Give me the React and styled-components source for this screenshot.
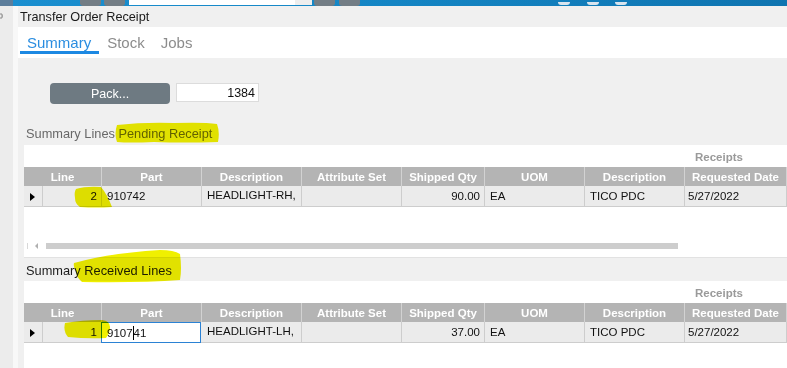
import React from "react";
import styled, { createGlobalStyle } from "styled-components";

const GlobalStyle = createGlobalStyle`
  html, body {
    margin: 0;
    padding: 0;
    background: #f0f0f0;
    overflow: hidden;
  }
  * {
    box-sizing: border-box;
  }
`;

const COLS = "19px 59px 100px 100px 100px 83px 100px 100px 102px";

const pendingRows = [
  { line: "2", part: "910742", desc: "HEADLIGHT-RH,", attr: "", qty: "90.00", uom: "EA", site: "TICO PDC", date: "5/27/2022" },
];

const receivedRows = [
  { line: "1", part: "910741", desc: "HEADLIGHT-LH,", attr: "", qty: "37.00", uom: "EA", site: "TICO PDC", date: "5/27/2022", editing: true },
];

const headers = ["Part", "Description", "Attribute Set", "Shipped Qty", "UOM", "Description", "Requested Date"];

export default function App() {
  return (
    <Page>
      <GlobalStyle />
      <TopBar>
        <AppCorner />
        <ToolButton $ml={67} />
        <ToolButton $ml={3} />
        <SearchBox $ml={4}>
          <SearchTail />
        </SearchBox>
        <ToolButton $ml={2} />
        <ToolButton $ml={4} />
        <TopIcon $ml={198} />
        <TopIcon $ml={17} />
        <TopIcon $ml={16} />
      </TopBar>
      <Body>
        <SideRail>
          <PinIcon width="8" height="8" viewBox="0 0 8 8">
            <path d="M0 4h2M2 1.5v5M2 2h3v4H2M5 4h1" stroke="#8a8a8a" strokeWidth="1" fill="none" />
          </PinIcon>
        </SideRail>
        <RailEdge />
        <Main>
          <TitleBar>Transfer Order Receipt</TitleBar>
          <Tabs>
            <Tab $active>Summary</Tab>
            <Tab>Stock</Tab>
            <Tab>Jobs</Tab>
          </Tabs>
          <Toolbar>
            <PackButton>Pack...</PackButton>
            <NumberField>1384</NumberField>
          </Toolbar>
          <SectionLabel $muted>Summary Lines Pending Receipt</SectionLabel>
          <GridPanel>
            <Grid rows={pendingRows} />
            <ScrollTrack>
              <ScrollStop />
              <ScrollArrow />
              <ScrollThumb />
            </ScrollTrack>
          </GridPanel>
          <SectionLabel $tight>Summary Received Lines</SectionLabel>
          <GridPanel $fill>
            <Grid rows={receivedRows} />
          </GridPanel>
        </Main>
      </Body>

      <Marker style={{ left: 114, top: 122 }} width="106" height="22" viewBox="0 0 106 22">
        <path d="M3 3 Q30 0 60 1 Q90 0 103 2 Q106 10 104 20 Q70 21 40 20 Q15 21 3 20 Q0 12 3 3Z" />
      </Marker>
      <Marker style={{ left: 74, top: 186 }} width="40" height="22" viewBox="0 0 40 22">
        <path d="M2 3 Q12 0 27 1 Q33 8 38 21 Q22 22 6 21 Q1 18 1 12 Q0 6 2 3Z" />
      </Marker>
      <Marker style={{ left: 70, top: 249 }} width="112" height="35" viewBox="0 0 112 35">
        <path d="M4 14 Q40 4 90 1 Q104 1 110 5 Q112 20 110 31 Q70 34 12 33 Q6 28 6 22 Q3 18 4 14Z" />
      </Marker>
      <Marker style={{ left: 62, top: 319 }} width="50" height="21" viewBox="0 0 50 21">
        <path d="M3 4 Q20 1 40 1 Q48 2 48 8 Q48 14 44 19 Q25 20 6 18 Q1 12 3 4Z" />
      </Marker>
    </Page>
  );
}

function Grid({ rows }) {
  return (
    <GridTable>
      <GroupRow>
        <GroupLabel>Receipts</GroupLabel>
      </GroupRow>
      <HeaderRow>
        <HeaderCell $span={2}>Line</HeaderCell>
        {headers.map((h, i) => (
          <HeaderCell key={i}>{h}</HeaderCell>
        ))}
      </HeaderRow>
      {rows.map((r, i) => (
        <DataRow key={i}>
          <RowSelector>
            <Caret />
          </RowSelector>
          <Cell $right>{r.line}</Cell>
          {r.editing ? (
            <EditCell>
              9107<TextCursor />41
            </EditCell>
          ) : (
            <Cell>{r.part}</Cell>
          )}
          <Cell $raised>{r.desc}</Cell>
          <Cell>{r.attr}</Cell>
          <Cell $right>{r.qty}</Cell>
          <Cell>{r.uom}</Cell>
          <Cell>{r.site}</Cell>
          <Cell $narrow>{r.date}</Cell>
        </DataRow>
      ))}
    </GridTable>
  );
}

const Page = styled.div`
  position: relative;
  width: 787px;
  height: 368px;
  overflow: hidden;
  display: flex;
  flex-direction: column;
  background: #f0f0f0;
  font-family: "Liberation Sans", Arial, sans-serif;
`;

const TopBar = styled.div`
  height: 6px;
  flex: none;
  display: flex;
  align-items: flex-end;
  background: linear-gradient(90deg, #1a8fd0 0%, #1485c4 50%, #0f74b0 100%);
`;

const AppCorner = styled.div`
  width: 13px;
  height: 6px;
  background: #5c7d9b;
`;

const ToolButton = styled.div`
  width: 21px;
  height: 6px;
  margin-left: ${(p) => p.$ml}px;
  background: #737d85;
  border-radius: 0 0 3px 3px;
`;

const SearchBox = styled.div`
  width: 183px;
  height: 5px;
  margin-left: ${(p) => p.$ml}px;
  align-self: flex-start;
  background: #ffffff;
  display: flex;
  justify-content: flex-end;
`;

const SearchTail = styled.div`
  width: 17px;
  background: #eeeeee;
`;

const TopIcon = styled.div`
  width: 12px;
  height: 3px;
  margin-left: ${(p) => p.$ml}px;
  margin-bottom: 1px;
  background: #d8e4ee;
  border-radius: 0 0 6px 6px;
`;

const Body = styled.div`
  flex: 1;
  display: flex;
  min-height: 0;
`;

const SideRail = styled.div`
  width: 13px;
  flex: none;
  background: #ececec;
  padding-top: 6px;
  overflow: hidden;
`;

const PinIcon = styled.svg`
  display: block;
  margin-left: -3px;
`;

const RailEdge = styled.div`
  width: 5px;
  flex: none;
  background: #f8f8f8;
`;

const Main = styled.div`
  flex: 1;
  display: flex;
  flex-direction: column;
  min-width: 0;
`;

const TitleBar = styled.div`
  height: 21px;
  flex: none;
  display: flex;
  align-items: center;
  padding-left: 2px;
  font-size: 12.7px;
  color: #1a1a1a;
`;

const Tabs = styled.div`
  height: 31px;
  flex: none;
  background: #ffffff;
  display: flex;
  align-items: stretch;
  padding: 4px 0 0 2px;
`;

const Tab = styled.div`
  display: flex;
  align-items: center;
  padding: 2px 8px 0 7px;
  margin-right: 1px;
  font-size: 15px;
  color: ${(p) => (p.$active ? "#2a8de0" : "#8c8c8c")};
  border-bottom: 3px solid ${(p) => (p.$active ? "#1c88e2" : "transparent")};
  margin-bottom: 4px;
`;

const Toolbar = styled.div`
  height: 66px;
  flex: none;
  display: flex;
  align-items: flex-start;
  padding: 25px 0 0 32px;
  gap: 6px;
`;

const PackButton = styled.div`
  width: 120px;
  height: 21px;
  border-radius: 4px;
  background: #6e7a82;
  color: #ffffff;
  font-size: 12.5px;
  display: flex;
  align-items: center;
  justify-content: center;
`;

const NumberField = styled.div`
  width: 83px;
  height: 19px;
  background: #ffffff;
  border: 1px solid #dcdcdc;
  font-size: 12.5px;
  color: #111111;
  display: flex;
  align-items: center;
  justify-content: flex-end;
  padding-right: 3px;
`;

const SectionLabel = styled.div`
  height: ${(p) => (p.$tight ? 22 : 21)}px;
  flex: none;
  display: flex;
  align-items: center;
  padding-left: 8px;
  padding-bottom: ${(p) => (p.$tight ? 0 : 2)}px;
  margin-top: ${(p) => (p.$tight ? 1 : 0)}px;
  font-size: 12.8px;
  color: ${(p) => (p.$muted ? "#686868" : "#1c1c1c")};
`;

const GridPanel = styled.div`
  margin-left: 6px;
  background: #ffffff;
  display: flex;
  flex-direction: column;
  flex: ${(p) => (p.$fill ? 1 : "none")};
  height: ${(p) => (p.$fill ? "auto" : "113px")};
  border-bottom: ${(p) => (p.$fill ? "none" : "1px solid #e2e2e2")};
`;

const GridTable = styled.div`
  display: flex;
  flex-direction: column;
  font-size: 11.5px;
`;

const GroupRow = styled.div`
  height: 22px;
  display: grid;
  grid-template-columns: ${COLS};
`;

const GroupLabel = styled.div`
  grid-column: 9;
  display: flex;
  align-items: center;
  padding: 1px 0 0 10px;
  color: #9a9a9a;
  font-weight: bold;
  font-size: 11.5px;
`;

const HeaderRow = styled.div`
  height: 19px;
  display: grid;
  grid-template-columns: ${COLS};
  background: #b4b4b4;
`;

const HeaderCell = styled.div`
  grid-column: span ${(p) => p.$span || 1};
  display: flex;
  align-items: center;
  justify-content: center;
  color: #ffffff;
  font-weight: bold;
  font-size: 11.5px;
  border-right: 1px solid #d2d2d2;
  white-space: nowrap;
  overflow: hidden;
`;

const DataRow = styled.div`
  height: 21px;
  display: grid;
  grid-template-columns: ${COLS};
  background: #ebebeb;
  border-bottom: 1px solid #cdcdcd;
`;

const RowSelector = styled.div`
  display: flex;
  align-items: center;
  padding-left: 6px;
  border-right: 1px solid #cdcdcd;
`;

const Caret = styled.div`
  width: 0;
  height: 0;
  border-top: 4px solid transparent;
  border-bottom: 4px solid transparent;
  border-left: 5px solid #000000;
  margin-top: 2px;
`;

const Cell = styled.div`
  display: flex;
  align-items: ${(p) => (p.$raised ? "flex-start" : "center")};
  justify-content: ${(p) => (p.$right ? "flex-end" : "flex-start")};
  padding: ${(p) => (p.$raised ? "3px 0 0 5px" : p.$right ? "0 4px 0 0" : p.$narrow ? "0 0 0 3px" : "0 0 0 5px")};
  color: #111111;
  border-right: 1px solid #cdcdcd;
  white-space: nowrap;
  overflow: hidden;
`;

const EditCell = styled.div`
  display: flex;
  align-items: center;
  padding-left: 5px;
  color: #111111;
  background: #ffffff;
  border: 1px solid #2b82d4;
  margin: 0 1px -1px -1px;
`;

const TextCursor = styled.span`
  display: inline-block;
  width: 1px;
  height: 14px;
  background: #000000;
`;

const ScrollTrack = styled.div`
  margin-top: auto;
  margin-bottom: 8px;
  height: 6px;
  display: flex;
  align-items: center;
  padding-left: 3px;
`;

const ScrollStop = styled.div`
  width: 1px;
  height: 6px;
  background: #d8d8d8;
`;

const ScrollArrow = styled.div`
  width: 0;
  height: 0;
  margin-left: 7px;
  border-top: 3px solid transparent;
  border-bottom: 3px solid transparent;
  border-right: 3px solid #b0b0b0;
`;

const ScrollThumb = styled.div`
  width: 632px;
  height: 6px;
  margin-left: 8px;
  background: #cdcdcd;
`;

const Marker = styled.svg`
  position: absolute;
  mix-blend-mode: multiply;
  pointer-events: none;
  path {
    fill: #f0f000;
  }
`;
